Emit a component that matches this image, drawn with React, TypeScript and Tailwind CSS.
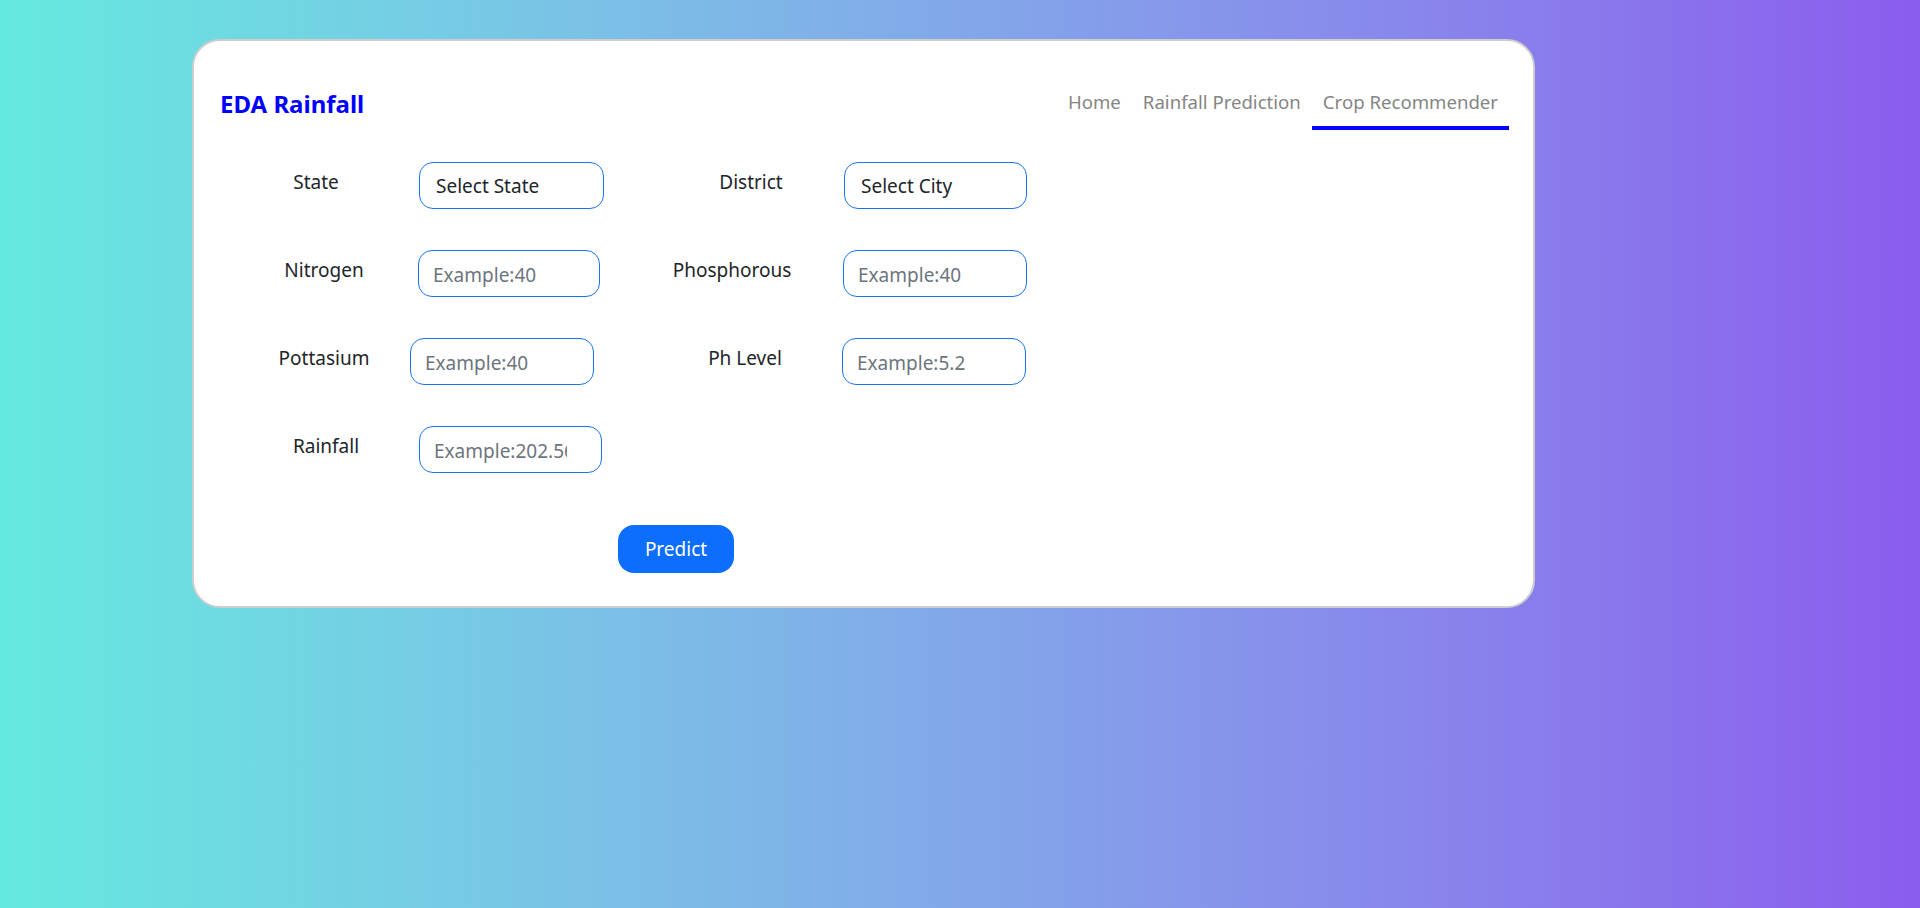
import React from "react";

const rows = [
  {
    l1: "State",
    l1c: "w-[144px] pr-[12px]",
    in1: "Select State",
    in1c: "ml-[25px] w-[185px]",
    select1: true,
    l2: "District",
    l2c: "ml-[69px] w-[144px] pl-[12px]",
    in2: "Select City",
    in2c: "ml-[27px] w-[183px]",
    select2: true,
  },
  {
    l1: "Nitrogen",
    l1c: "w-[144px] pl-[4px]",
    in1: "Example:40",
    in1c: "ml-[24px] w-[182px]",
    l2: "Phosphorous",
    l2c: "ml-[72px] w-[144px] pr-[24px]",
    in2: "Example:40",
    in2c: "ml-[27px] w-[184px]",
  },
  {
    l1: "Pottasium",
    l1c: "w-[144px] pl-[4px]",
    in1: "Example:40",
    in1c: "ml-[16px] w-[184px]",
    l2: "Ph Level",
    l2c: "ml-[79px] w-[144px]",
    in2: "Example:5.2",
    in2c: "ml-[25px] w-[184px]",
  },
  {
    l1: "Rainfall",
    l1c: "w-[144px] pl-[8px]",
    in1: "Example:202.56",
    in1c: "ml-[25px] w-[183px]",
  },
];

const Field = ({ text, cls, select }: { text: string; cls: string; select?: boolean }) => {
  if (select) {
    return (
      <div
        className={`${cls} h-[47px] shrink-0 rounded-[14px] border border-[#1a73f0] flex items-center pl-[16px] pt-[2px] text-[19px] text-[#212529]`}
      >
        {text}
      </div>
    );
  }
  return (
    <input
      className={`${cls} h-[47px] shrink-0 rounded-[14px] border border-[#1a73f0] pl-[14px] pr-[34px] pt-[2px] text-[19px] text-[#212529] placeholder:text-[#6c757d] outline-none`}
      placeholder={text}
    />
  );
};

export default function App() {
  return (
    <div
      className="min-h-[908px] bg-gradient-to-r from-[#64e9df] to-[#8b5ced] pt-[39px] pl-[192px]"
      style={{ fontFamily: '"Noto Sans", "Open Sans", sans-serif' }}
    >
      <div className="w-[1343px] h-[569px] rounded-[28px] border-2 border-[#cdcdcd] bg-white">
        <div className="flex items-end justify-between h-[89px] pl-[26px] pr-[24px]">
          <h1 className="mb-[8px] text-[24px] font-bold text-[#0000ff] leading-[36px]">EDA Rainfall</h1>
          <nav className="flex text-[18.6px] leading-[27px] text-[#858585]">
            <a href="#" className="px-[11px] pb-[11px] border-b-4 border-transparent">
              Home
            </a>
            <a href="#" className="px-[11px] pb-[11px] border-b-4 border-transparent">
              Rainfall Prediction
            </a>
            <a href="#" className="px-[11px] pb-[11px] border-b-4 border-[#0000ff]">
              Crop Recommender
            </a>
          </nav>
        </div>

        <div className="mt-[32px] pl-[56px] flex flex-col gap-[41px]">
          {rows.map((r) => (
            <div key={r.l1} className="flex items-center">
              <label className={`${r.l1c} shrink-0 mb-[6px] text-center text-[19px] text-[#212529]`}>{r.l1}</label>
              <Field text={r.in1} cls={r.in1c} select={r.select1} />
              {r.l2 && (
                <>
                  <label className={`${r.l2c} shrink-0 mb-[6px] text-center text-[19px] text-[#212529]`}>
                    {r.l2}
                  </label>
                  <Field text={r.in2!} cls={r.in2c!} select={r.select2} />
                </>
              )}
            </div>
          ))}
        </div>

        <button className="mt-[52px] ml-[424px] w-[116px] h-[48px] rounded-[16px] bg-[#0d6efd] text-white text-[19px]">
          Predict
        </button>
      </div>
    </div>
  );
}
